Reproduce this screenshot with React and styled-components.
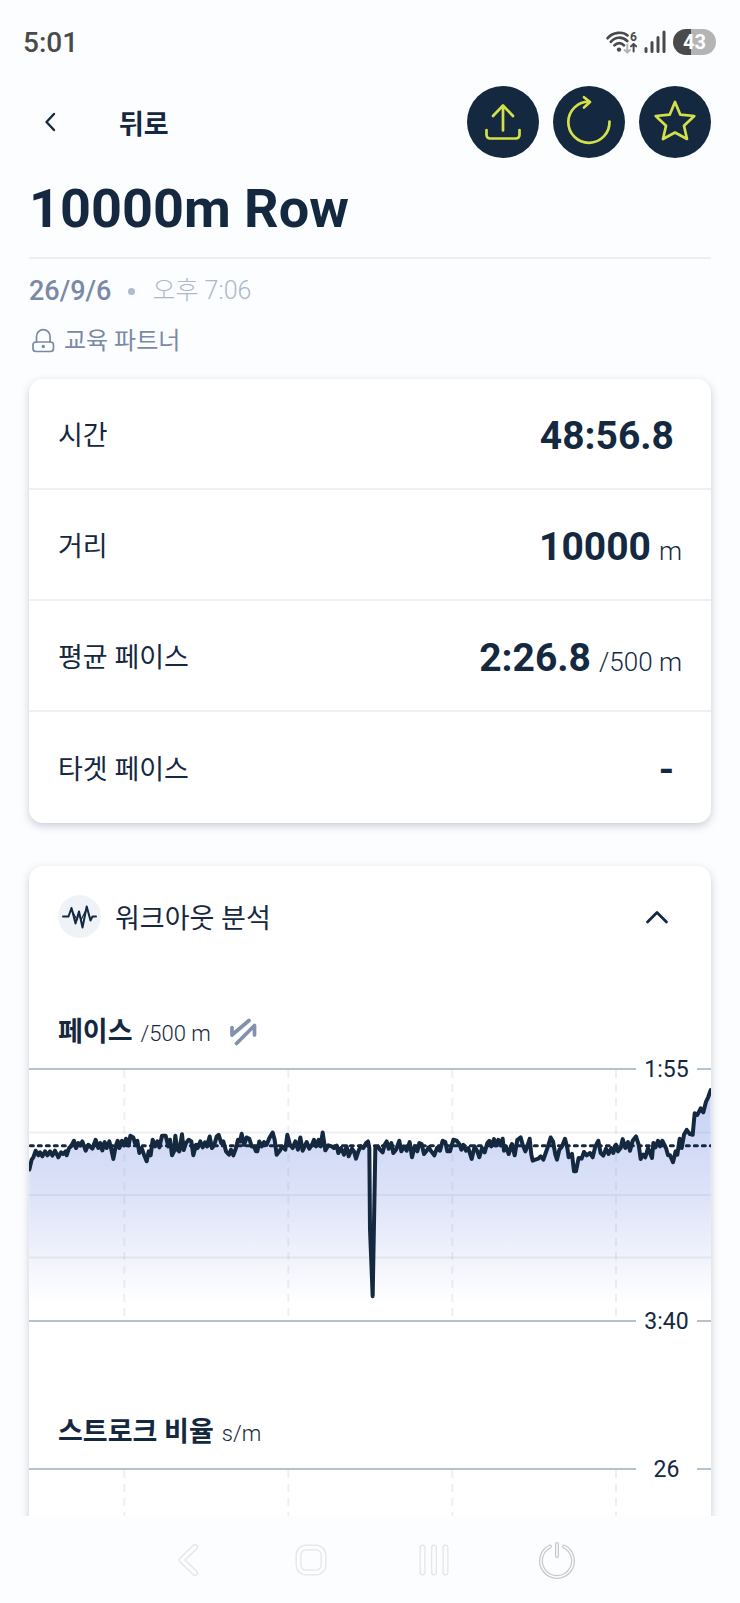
import { useState } from "react"
import styled, { createGlobalStyle } from "styled-components"

const GlobalStyle = createGlobalStyle`
  * {
    box-sizing: border-box;
  }

  body {
    margin: 0;
    background-color: #fcfdff;
    color: #142840;
    font-family: Roboto, "Noto Sans CJK KR", sans-serif;
  }

  button {
    padding: 0;
    border: none;
    background: none;
    color: inherit;
    font: inherit;
    cursor: pointer;
  }
`

const Screen = styled.div`
  display: flex;
  flex-direction: column;
  height: 100vh;
`

const StatusBar = styled.div`
  display: flex;
  flex: none;
  align-items: center;
  justify-content: space-between;
  height: 84px;
  padding: 0 24px 0 23px;
  color: #4a4a4a;
`

const Clock = styled.span`
  font-size: 28px;
  font-weight: 500;
`

const StatusIcons = styled.div`
  display: flex;
  align-items: center;
  gap: 7px;
`

const Battery = styled.span`
  width: 43px;
  border-radius: 13px;
  background: linear-gradient(to right, #4a4a4a 43%, #b4b4b4 43%);
  color: #fff;
  font-size: 20px;
  font-weight: 700;
  line-height: 26px;
  text-align: center;
`

const Content = styled.main`
  flex: 1;
  min-height: 0;
  padding: 0 29px;
  overflow-y: auto;
  scrollbar-width: none;
`

const TopBar = styled.header`
  display: flex;
  align-items: center;
  height: 76px;
`

const BackButton = styled.button`
  display: flex;
  align-items: center;
  justify-content: center;
  width: 42px;
  height: 42px;
`

const BackLabel = styled.span`
  flex: 1;
  padding-left: 48px;
  font-size: 27px;
  font-weight: 700;
`

const Actions = styled.div`
  display: flex;
  gap: 14px;
`

const RoundButton = styled.button`
  width: 72px;
  height: 72px;
  border-radius: 50%;
  background-color: #142840;
  color: #d3e04a;
`

const Title = styled.h1`
  margin: 0;
  padding: 17px 0 16px;
  border-bottom: 2px solid #eceef1;
  font-size: 54px;
  font-weight: 700;
  line-height: 64px;
`

const Meta = styled.div`
  display: flex;
  align-items: center;
  margin-top: 14px;
  color: #7a8aa6;
  font-size: 24px;
  line-height: 36px;
`

const DateText = styled.span`
  font-size: 27px;
  font-weight: 500;
`

const Dot = styled.span`
  width: 7px;
  height: 7px;
  margin: 0 17px;
  border-radius: 50%;
  background-color: #adbccf;
`

const TimeText = styled.span`
  color: #adb9cb;
  font-size: 25px;
  font-weight: 300;
`

const Partner = styled.span`
  margin-left: 7px;
`

const Card = styled.section`
  margin-top: ${(props) => props.$gap}px;
  border-radius: 14px;
  background-color: #fff;
  box-shadow: 0 3px 8px rgba(20, 38, 63, 0.22);
`

const StatList = styled.dl`
  margin: 0;
`

const StatRow = styled.div`
  display: flex;
  align-items: center;
  justify-content: space-between;
  min-height: 111px;
  padding: 0 29px;

  &:not(:last-child) {
    border-bottom: 2px solid #eff0f2;
  }
`

const StatLabel = styled.dt`
  font-size: 27px;
`

const StatValue = styled.dd`
  display: flex;
  align-items: baseline;
  gap: 8px;
  margin: 0;
  padding-top: 4px;
  font-size: 39px;
  font-weight: 700;
`

const Unit = styled.span`
  font-size: ${(props) => props.$size}px;
  font-weight: 300;
`

const PanelHeader = styled.button`
  display: flex;
  align-items: center;
  width: 100%;
  padding: 29px 41px 0 29px;
  text-align: left;
`

const PanelIcon = styled.span`
  width: 43px;
  height: 43px;
  border-radius: 50%;
  background-color: #eff3f8;
`

const PanelTitle = styled.span`
  flex: 1;
  padding-left: 14px;
  font-size: 27px;
`

const Chart = styled.section`
  padding-top: ${(props) => props.$gap}px;
`

const ChartHeader = styled.div`
  display: flex;
  align-items: baseline;
  gap: 8px;
  height: 40px;
  padding: 0 29px;
  line-height: 40px;
`

const ChartTitle = styled.h2`
  margin: 0;
  font-size: 27px;
  font-weight: 700;
`

const SwapButton = styled.button`
  align-self: center;
  height: 28px;
  margin-left: 10px;
`

const Plot = styled.div`
  position: relative;
  height: 254px;
  margin-top: 16px;
  border: solid #b3c2ce;
  border-width: 2px 0;
`

const PlotSvg = styled.svg`
  display: block;
  width: 100%;
  height: 100%;
`

const AxisLabel = styled.span`
  position: absolute;
  right: 14px;
  ${(props) => (props.$bottom ? "bottom: -20px" : "top: -18px")};
  width: 61px;
  background-color: #fff;
  font-size: 23px;
  line-height: 36px;
  text-align: center;
`

const NavBar = styled.nav`
  display: flex;
  flex: none;
  align-items: center;
  justify-content: space-between;
  height: 87px;
  padding: 0 163px 0 168px;
`

const NavButton = styled.button`
  width: 40px;
  height: 40px;
  color: ${(props) => (props.$dark ? "#c8c8c8" : "#e4e5e8")};
`

const stats = [
  { label: "시간", value: "48:56.8", unit: "" },
  { label: "거리", value: "10000", unit: "m" },
  { label: "평균 페이스", value: "2:26.8", unit: "/500 m" },
  { label: "타겟 페이스", value: "-", unit: "" },
]

// pace samples, in three runs: start offset, then x,y pairs
const runs = [
  [-87, "88,355 95,325 100,318 107,298 115,312 120,303 127,315 135,300 142,312 150,300 157,313 165,298 175,318 183,303 190,308 197,300 200,312 207,290 213,285 222,268 228,290 235,275 241,282 247,270 257,298 265,280 277,292 287,265 295,290 301,275 307,297 314,272 320,290 328,270 333,290 340,323 347,285 353,268 358,290 366,268 372,282 378,262 386,282 391,253 400,258 405,275 412,268 418,305 425,290 432,310 440,330 446,300 452,312 458,265 465,285 472,270 478,288 486,253 497,253 505,285 510,265 516,312 522,300 526,253 532,295 538,300 546,248 551,296 558,275 566,265 574,270 580,312 588,280 593,290 601,270 608,288 615,273 621,285 629,255 636,290 643,280 650,255 656,250 664,275 670,270 678,300 687,310 693,295 700,312 708,290 714,265 720,270"],
  [633, "5,247 12,280 20,258 28,262 35,285 42,285 48,300 52,300 58,270 65,285 72,272 80,280 88,260 98,243 104,265 110,310 118,300 127,285 136,295 142,250 150,280 158,290 166,270 174,295 181,258 188,298 200,272 208,292 216,280 222,265 228,285 236,265 242,285 248,243 256,297 265,282 275,285 282,290 290,283 295,305 303,290 312,310 320,285 326,315 336,292 342,300 348,322 355,300 362,285 370,290 378,275 384,270 388,290 390,535 398,738 404,405 406,290 414,285 420,295 428,303 434,280 440,270 446,292 454,275 460,305 468,295 478,268 484,300 492,285 500,298 509,272 516,318 524,285 532,300 538,275 545,278 552,308 560,298 566,288 574,300 583,312 591,290 600,298 608,268 616,272 622,300 630,300 640,265 650,268 658,278 664,295 670,280 678,298 685,290 695,323 704,285 712,300 718,318 726,290 734,303 742,275 748,268"],
  [1383, "4,285 12,263 18,282 25,265 32,282 38,262 42,298 48,285 56,308 66,278 74,312 82,265 92,258 98,280 106,300 112,285 119,262 124,310 128,328 136,325 145,322 152,315 160,325 166,308 174,285 182,258 189,270 196,310 201,325 208,295 216,285 225,262 232,290 236,318 246,308 252,360 258,360 266,320 275,322 282,302 290,312 300,305 308,318 316,285 325,268 332,305 340,313 348,292 356,308 364,290 370,305 378,280 384,300 392,290 398,263 406,290 414,272 420,298 428,268 438,255 446,280 452,323 460,310 466,318 474,290 486,320 490,275 496,288 504,268 510,285 517,268 528,290 534,312 540,312 549,333 557,300 562,310 569,262 575,290 582,250 590,235 600,248 608,250 614,185 622,190 632,170 640,182 648,150 655,135 662,115"],
]

const points = runs
  .flatMap(([start, text]) =>
    text.split(" ").map((pair) => {
      const [x, y] = pair.split(",").map(Number)
      return `${x + start},${y}`
    })
  )
  .join(" ")

const thin = { fill: "none", stroke: "currentColor", strokeLinecap: "round", strokeLinejoin: "round" }

const WifiIcon = () => (
  <svg width="31" height="23" viewBox="0 0 31 23" {...thin} strokeWidth="2.7">
    <path d="M1.6 7.2C7 .7 17 .4 21.500 4.400M4.800 10.800c4.600-5.200 11.600-5.400 16.400-.8M8.400 14.300c2.800-3 6.800-3 9.600 0" />
    <circle cx="13" cy="18.6" r="2.200" fill="currentColor" stroke="none" />
    <path d="M21.3 13.5v8M18.6 19l2.7 2.6L24 19" stroke="#b4b4b4" strokeWidth="2" />
    <path d="M27.6 20.5v-7M25 15.4l2.6-2.5 2.6 2.5" strokeWidth="2" />
    <text x="24" y="9.5" fill="currentColor" stroke="none" fontSize="12" fontWeight="700">6</text>
  </svg>
)

const SignalIcon = () => (
  <svg width="22" height="24" viewBox="0 0 22 24" {...thin} strokeWidth="3">
    <path d="M2 18.5v3M8 12.5v9M14 7.5v14M20 2v19.5" />
  </svg>
)

const UploadIcon = () => (
  <svg width="72" height="72" viewBox="0 0 72 72" {...thin} strokeWidth="2.7">
    <path d="M36 19.5v25M26 30l10-10.5L46 30M19.5 44v5a3.5 3.5 0 0 0 3.5 3.5h26a3.5 3.5 0 0 0 3.5-3.5v-5" />
  </svg>
)

const RefreshIcon = () => (
  <svg width="72" height="72" viewBox="0 0 72 72" {...thin} strokeWidth="2.7">
    <path d="M56.5 35.5A20.6 20.6 0 1 1 36.5 15.6M31 11.2l6 4.9-6 5.4" />
  </svg>
)

const StarIcon = () => (
  <svg width="72" height="72" viewBox="0 0 72 72" {...thin} strokeWidth="2.7">
    <path d="M36 16l5.3 12.700 14 1.3L45 39.800 48 53l-12-6.500L24 53l3-13.200L16.700 30l14-1.300z" />
  </svg>
)

const LockIcon = () => (
  <svg width="28" height="28" viewBox="0 0 28 28" {...thin} strokeWidth="1.7">
    <rect x="4" y="15" width="20.5" height="9.5" rx="3" />
    <path d="M7.5 15V9.500a6.8 6.8 0 0 1 13.6 0V15" />
    <circle cx="14.3" cy="19.500" r="1.7" fill="currentColor" stroke="none" />
  </svg>
)

const PulseIcon = () => (
  <svg width="43" height="43" viewBox="0 0 43 43" {...thin} strokeWidth="2">
    <path d="M5 21.500h5.500L13.500 13l4 15.500L21 16.500l3.500 16L28.700 11.500l3.800 14 2-4H38" />
    <path d="M13.500 14.500L19 25l2-6.500L23 25l5-10" strokeWidth="1.2" />
  </svg>
)

const SwapIcon = () => (
  <svg width="28" height="28" viewBox="0 0 28 28" {...thin} stroke="#8092ac" strokeWidth="3.7">
    <path d="M20 2.500L3 17V9.500M7.5 25.500L25.5 7.500V17" />
  </svg>
)

// outlined glyph: a wide stroke with a narrower one in the page colour on top
const NavGlyph = ({ d, width = 6 }) => (
  <svg width="40" height="40" viewBox="0 0 40 40" {...thin}>
    <path d={d} strokeWidth={width} />
    <path d={d} stroke="#fcfdff" strokeWidth={width - 2.5} />
  </svg>
)

const navItems = [
  { label: "뒤로", d: "M27 7L13.500 20l13.500 13" },
  { label: "홈", d: "M15 7.500h10a7.500 7.500 0 0 1 7.500 7.500v10a7.500 7.500 0 0 1-7.500 7.500H15a7.500 7.500 0 0 1-7.500-7.500V15a7.500 7.500 0 0 1 7.500-7.500z" },
  { label: "최근 앱", d: "M8.5 7.500v25M20 7.500v25M31.5 7.500v25" },
  { label: "전원", d: "M20 4v12M13 6.500a16 16 0 1 0 14 0", width: 4, dark: true },
]

const Guides = ({ rows }) => (
  <g stroke="#9aa5ba" strokeOpacity="0.18" strokeWidth="2">
    {rows.map((y) => (
      <line key={y} x1="0" x2="2046" y1={y} y2={y} vectorEffect="non-scaling-stroke" />
    ))}
    {[286, 778, 1270, 1761].map((x) => (
      <line key={x} x1={x} x2={x} y1="54" y2="810" strokeDasharray="8 6" vectorEffect="non-scaling-stroke" />
    ))}
  </g>
)

const PaceChart = () => (
  <PlotSvg viewBox="0 54 2046 756" preserveAspectRatio="none" role="img" aria-label="페이스">
    <defs>
      <linearGradient id="pace" gradientUnits="userSpaceOnUse" x1="0" y1="110" x2="0" y2="760">
        <stop offset="0" stopColor="#c5d0f5" />
        <stop offset="0.5" stopColor="#dde3f8" />
        <stop offset="1" stopColor="#ffffff" />
      </linearGradient>
    </defs>
    <polygon points={`0,760 ${points} 2046,760`} fill="url(#pace)" />
    <Guides rows={[243, 432, 621]} />
    <g fill="none" stroke="#142840" strokeLinecap="round" strokeLinejoin="round">
      <line x1="4" x2="2046" y1="283" y2="283" strokeWidth="3" strokeDasharray="3 5" vectorEffect="non-scaling-stroke" />
      <polyline points={points} strokeWidth="4" vectorEffect="non-scaling-stroke" />
    </g>
  </PlotSvg>
)

const App = () => {
  const [open, setOpen] = useState(true)

  return (
    <Screen>
      <GlobalStyle />
      <StatusBar>
        <Clock>5:01</Clock>
        <StatusIcons>
          <WifiIcon />
          <SignalIcon />
          <Battery>43</Battery>
        </StatusIcons>
      </StatusBar>

      <Content>
        <TopBar>
          <BackButton aria-label="뒤로">
            <svg width="12" height="20" viewBox="0 0 12 20" {...thin} strokeWidth="2.4">
              <path d="M10 2L2.5 10l7.5 8" />
            </svg>
          </BackButton>
          <BackLabel>뒤로</BackLabel>
          <Actions>
            <RoundButton aria-label="공유"><UploadIcon /></RoundButton>
            <RoundButton aria-label="다시 하기"><RefreshIcon /></RoundButton>
            <RoundButton aria-label="즐겨찾기"><StarIcon /></RoundButton>
          </Actions>
        </TopBar>

        <Title>10000m Row</Title>
        <Meta>
          <DateText>26/9/6</DateText>
          <Dot />
          <TimeText>오후 7:06</TimeText>
        </Meta>
        <Meta>
          <LockIcon />
          <Partner>교육 파트너</Partner>
        </Meta>

        <Card $gap={20}>
          <StatList>
            {stats.map((stat) => (
              <StatRow key={stat.label}>
                <StatLabel>{stat.label}</StatLabel>
                <StatValue>
                  {stat.value}
                  <Unit $size={26}>{stat.unit}</Unit>
                </StatValue>
              </StatRow>
            ))}
          </StatList>
        </Card>

        <Card $gap={43}>
          <PanelHeader aria-expanded={open} onClick={() => setOpen(!open)}>
            <PanelIcon><PulseIcon /></PanelIcon>
            <PanelTitle>워크아웃 분석</PanelTitle>
            <svg width="26" height="16" viewBox="0 0 26 16" {...thin} strokeWidth="2.8">
              <path d={open ? "M3.5 13L13 3.5 22.5 13" : "M3.5 3.5L13 13l9.5-9.5"} />
            </svg>
          </PanelHeader>
          {open && (
            <>
              <Chart $gap={74}>
                <ChartHeader>
                  <ChartTitle>페이스</ChartTitle>
                  <Unit $size={22}>/500 m</Unit>
                  <SwapButton aria-label="단위 전환"><SwapIcon /></SwapButton>
                </ChartHeader>
                <Plot>
                  <PaceChart />
                  <AxisLabel>1:55</AxisLabel>
                  <AxisLabel $bottom>3:40</AxisLabel>
                </Plot>
              </Chart>
              <Chart $gap={90}>
                <ChartHeader>
                  <ChartTitle>스트로크 비율</ChartTitle>
                  <Unit $size={22}>s/m</Unit>
                </ChartHeader>
                <Plot>
                  <PlotSvg viewBox="0 54 2046 756" preserveAspectRatio="none" role="img" aria-label="스트로크 비율">
                    <Guides rows={[243, 432, 621]} />
                  </PlotSvg>
                  <AxisLabel>26</AxisLabel>
                </Plot>
              </Chart>
            </>
          )}
        </Card>
      </Content>

      <NavBar>
        {navItems.map((item) => (
          <NavButton key={item.label} aria-label={item.label} $dark={item.dark}>
            <NavGlyph d={item.d} width={item.width} />
          </NavButton>
        ))}
      </NavBar>
    </Screen>
  )
}

export default App
